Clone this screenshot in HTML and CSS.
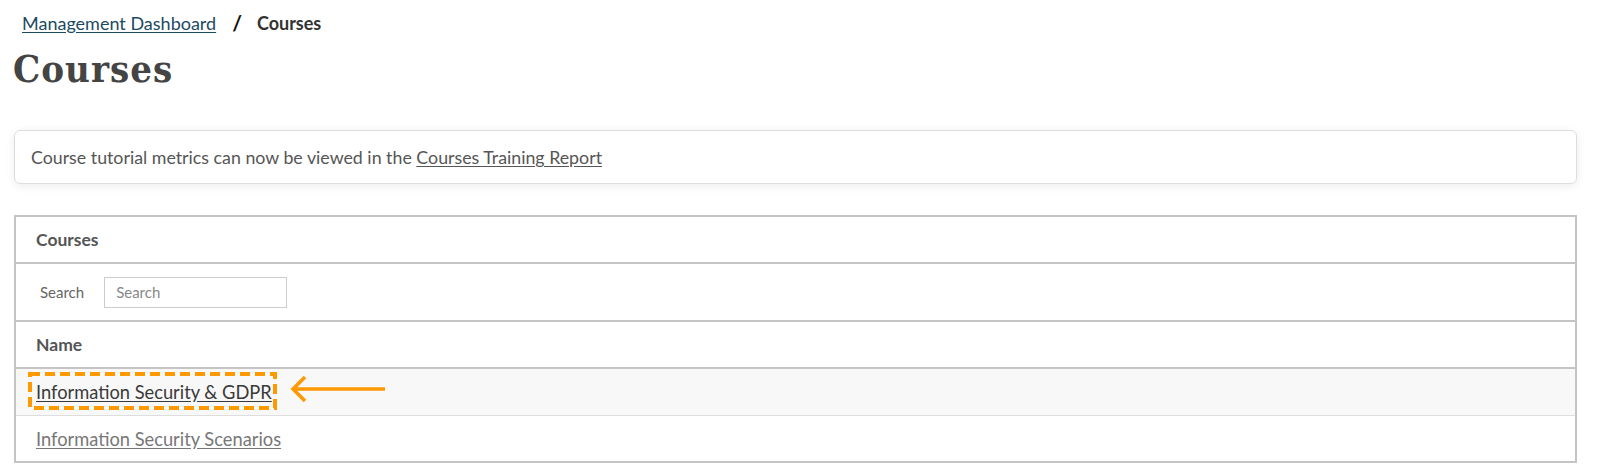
FILE: index.html
```html
<!DOCTYPE html>
<html lang="en">
<head>
<meta charset="utf-8">
<title>Courses</title>
<link rel="stylesheet" href="styles.css">
</head>
<body>
<div class="page">
  <nav class="crumbs">
    <a class="crumb-link" href="#">Management Dashboard</a>
    <span class="crumb-sep">/</span>
    <span class="crumb-current">Courses</span>
  </nav>
  <h1 class="title">Courses</h1>
  <div class="alert">
    <span>Course tutorial metrics can now be viewed in the <a class="alert-link" href="#">Courses Training Report</a></span>
  </div>
  <div class="grid">
    <div class="row row-caption">Courses</div>
    <div class="row row-search">
      <label class="search-label" for="q">Search</label>
      <input id="q" class="search-input" type="text" placeholder="Search">
    </div>
    <div class="row row-head">Name</div>
    <div class="row row-item row-hover">
      <a class="item-link item-link-active" href="#">Information Security &amp; GDPR</a>
      <svg class="highlight" width="249" height="38" viewBox="0 0 249 38">
        <rect x="2" y="2" width="245" height="34" fill="none" stroke="#ff9900" stroke-width="4" stroke-dasharray="10 5"/>
      </svg>
      <svg class="arrow" width="100" height="28" viewBox="0 0 100 28">
        <path d="M5 14 H97 M17 2 L5 14 L17 26" fill="none" stroke="#ff9900" stroke-width="3.5"/>
      </svg>
    </div>
    <div class="row row-item row-last">
      <a class="item-link" href="#">Information Security Scenarios</a>
    </div>
  </div>
</div>
</body>
</html>
```

FILE: styles.css
```css
html, body {
  margin: 0;
  padding: 0;
  background: #ffffff;
}
body {
  font-family: Lato, "Open Sans", sans-serif;
  color: #555555;
}
.page {
  padding: 12px 27px 0 14px;
}
.crumbs {
  display: flex;
  align-items: center;
  height: 21px;
  padding-left: 8px;
  font-size: 18px;
}
.crumb-link {
  color: #1c4a63;
  text-decoration: underline;
  text-underline-offset: 2px;
}
.crumb-sep {
  margin: 0 15px 0 16px;
  color: #111;
  font-size: 21px;
  font-weight: bold;
}
.crumb-current {
  color: #333;
  font-weight: bold;
  font-size: 18px;
}
.title {
  margin: 11px 0 0 -1px;
  font-family: "DejaVu Serif Condensed", "DejaVu Serif", serif;
  font-weight: bold;
  font-size: 38px;
  letter-spacing: 1px;
  line-height: 50px;
  color: #444444;
}
.alert {
  margin-top: 36px;
  height: 52px;
  display: flex;
  align-items: center;
  padding: 0 16px;
  border: 1px solid #dddddd;
  border-radius: 6px;
  box-shadow: 0 2px 10px rgba(0, 0, 0, 0.08);
  font-size: 17.8px;
  color: #555;
}
.alert-link {
  color: #555;
  text-decoration: underline;
  text-underline-offset: 2px;
}
.grid {
  margin-top: 31px;
  border: 2px solid #c4c4c4;
}
.row {
  display: flex;
  align-items: center;
  padding-left: 20px;
  border-bottom: 2px solid #c4c4c4;
  position: relative;
}
.row-caption {
  height: 45px;
  font-weight: bold;
  font-size: 17.5px;
  color: #555;
}
.row-search {
  height: 56px;
  padding-left: 24px;
  font-size: 15px;
}
.search-label {
  color: #666;
}
.search-input {
  margin-left: 20px;
  width: 183px;
  height: 31px;
  box-sizing: border-box;
  border: 1px solid #cccccc;
  padding: 0 11px;
  font-family: Lato, sans-serif;
  font-size: 15px;
  color: #555;
}
.search-input::placeholder {
  color: #888;
}
.row-head {
  height: 45px;
  font-weight: bold;
  font-size: 17.5px;
  color: #555;
}
.row-item {
  height: 46px;
  font-size: 18.3px;
}
.row-hover {
  background: #f8f8f8;
  border-bottom: 1px solid #dedede;
}
.row-last {
  border-bottom: none;
  height: 45px;
}
.item-link {
  color: #777777;
  text-decoration: underline;
  text-underline-offset: 2px;
}
.item-link-active {
  color: #3a3a3a;
}
.highlight {
  position: absolute;
  left: 12px;
  top: 3px;
}
.arrow {
  position: absolute;
  left: 272px;
  top: 6px;
}
```
